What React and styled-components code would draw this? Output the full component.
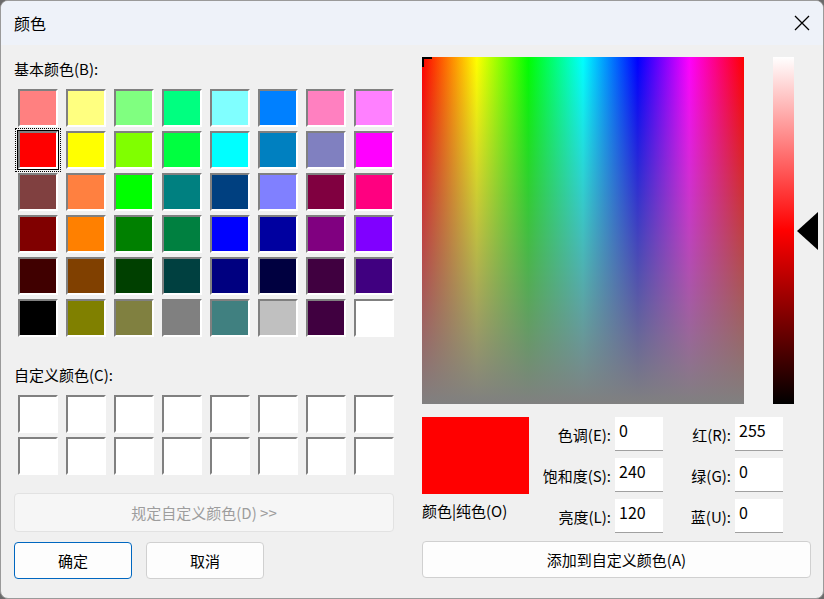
import React from "react";
import styled, { createGlobalStyle } from "styled-components";

const GlobalStyle = createGlobalStyle`
  html, body { margin: 0; padding: 0; background: #6b6b6b; }
  body { font-family: "Noto Sans CJK SC", "Noto Sans", sans-serif; font-size: 15px; color: #000; }
`;

const BASIC = [
  ["#FF8080", "#FFFF80", "#80FF80", "#00FF80", "#80FFFF", "#0080FF", "#FF80C0", "#FF80FF"],
  ["#FF0000", "#FFFF00", "#80FF00", "#00FF40", "#00FFFF", "#0080C0", "#8080C0", "#FF00FF"],
  ["#804040", "#FF8040", "#00FF00", "#008080", "#004080", "#8080FF", "#800040", "#FF0080"],
  ["#800000", "#FF8000", "#008000", "#008040", "#0000FF", "#0000A0", "#800080", "#8000FF"],
  ["#400000", "#804000", "#004000", "#004040", "#000080", "#000040", "#400040", "#400080"],
  ["#000000", "#808000", "#808040", "#808080", "#408080", "#C0C0C0", "#400040", "#FFFFFF"],
];

const Window = styled.div`
  width: 822px;
  height: 597px;
  border: 1px solid #9a9a9a;
  border-radius: 8px;
  background: #f0f0f0;
  overflow: hidden;
  display: flex;
  flex-direction: column;
`;

const TitleBar = styled.div`
  height: 44px;
  background: #eef2f9;
  display: flex;
  align-items: center;
  justify-content: space-between;
  padding: 0 12px 0 13px;
  font-size: 16px;
`;

const Body = styled.div`
  flex: 1;
  display: flex;
  padding: 12px 13px 0 13px;
`;

const Left = styled.div`
  width: 380px;
  display: flex;
  flex-direction: column;
`;

const Label = styled.div`
  height: 24px;
  line-height: 24px;
  font-size: 15px;
`;

const Grid = styled.div`
  display: grid;
  grid-template-columns: repeat(8, 40px);
  grid-auto-rows: 38px;
  column-gap: 8px;
  row-gap: 4px;
  padding-left: 4px;
  margin-top: 8px;
`;

const Swatch = styled.div`
  background: ${(p) => p.color};
  border-top: 2px solid #808080;
  border-left: 2px solid #808080;
  border-bottom: 2px solid #fff;
  border-right: 2px solid #fff;
  box-sizing: border-box;
  outline: ${(p) => (p.selected ? "1px dotted #000" : "none")};
  outline-offset: 2px;
  box-shadow: ${(p) => (p.selected ? "0 0 0 1px #000" : "none")};
`;

const WideButton = styled.div`
  height: 37px;
  border: 1px solid #e2e2e2;
  border-radius: 4px;
  background: #f6f6f6;
  color: #9d9d9d;
  display: flex;
  align-items: center;
  justify-content: center;
  margin-top: ${(p) => p.mt || 0}px;
`;

const Button = styled.div`
  width: ${(p) => p.w}px;
  height: 37px;
  box-sizing: border-box;
  border: 1px solid ${(p) => (p.primary ? "#0067c0" : "#d0d0d0")};
  border-radius: 4px;
  background: #fdfdfd;
  display: flex;
  align-items: center;
  justify-content: center;
`;

const ButtonRow = styled.div`
  display: flex;
  gap: 14px;
  margin-top: 10px;
`;

const Right = styled.div`
  margin-left: 28px;
  display: flex;
  flex-direction: column;
`;

const Top = styled.div`
  display: flex;
  height: 347px;
  align-items: flex-start;
`;

const Spectrum = styled.div`
  width: 322px;
  height: 347px;
  position: relative;
  background:
    linear-gradient(to bottom, rgba(128,128,128,0), #808080),
    linear-gradient(to right, #f00, #ff0 17%, #0f0 33%, #0ff 50%, #00f 67%, #f0f 83%, #f00);
`;

const Cross = styled.div`
  position: absolute;
  left: 0;
  top: 0;
  width: 8px;
  height: 8px;
  border-left: 2px solid #000;
  border-top: 2px solid #000;
`;

const LumBar = styled.div`
  margin-left: 29px;
  width: 21px;
  height: 347px;
  background: linear-gradient(to bottom, #fff, #f00 50%, #000);
`;

const Arrow = styled.div`
  margin-left: 3px;
  margin-top: 155px;
  width: 0;
  height: 0;
  border-top: 19px solid transparent;
  border-bottom: 19px solid transparent;
  border-right: 21px solid #000;
`;

const Bottom = styled.div`
  display: flex;
  margin-top: 13px;
`;

const PreviewCol = styled.div`
  width: 110px;
  display: flex;
  flex-direction: column;
`;

const Preview = styled.div`
  width: 107px;
  height: 77px;
  background: #f00;
`;

const PreviewLabel = styled.div`
  margin-top: 6px;
  font-size: 15px;
`;

const Fields = styled.div`
  display: grid;
  grid-template-columns: 90px 48px 72px 48px;
  grid-auto-rows: 34px;
  row-gap: 7px;
  margin-left: -7px;
`;

const FieldLabel = styled.div`
  display: flex;
  align-items: center;
  justify-content: flex-end;
  padding-right: 4px;
`;

const Input = styled.div`
  background: #fff;
  border-bottom: 1px solid #a0a0a0;
  padding: 2px 4px;
  font-size: 16px;
  line-height: 22px;
`;

const X = () => (
  <svg width="18" height="18" viewBox="0 0 18 18">
    <path d="M2 2 L16 16 M16 2 L2 16" stroke="#000" strokeWidth="1.3" />
  </svg>
);

export default function App() {
  return (
    <>
      <GlobalStyle />
      <Window>
        <TitleBar>
          <span>颜色</span>
          <X />
        </TitleBar>
        <Body>
          <Left>
            <Label>基本颜色(B):</Label>
            <Grid>
              {BASIC.flat().map((c, i) => (
                <Swatch key={i} color={c} selected={i === 8} />
              ))}
            </Grid>
            <Label style={{ marginTop: 26 }}>自定义颜色(C):</Label>
            <Grid>
              {Array.from({ length: 16 }).map((_, i) => (
                <Swatch key={i} color="#fff" />
              ))}
            </Grid>
            <WideButton mt={18}>规定自定义颜色(D) &gt;&gt;</WideButton>
            <ButtonRow>
              <Button w={118} primary>确定</Button>
              <Button w={118}>取消</Button>
            </ButtonRow>
          </Left>
          <Right>
            <Top>
              <Spectrum>
                <Cross />
              </Spectrum>
              <LumBar />
              <Arrow />
            </Top>
            <Bottom>
              <PreviewCol>
                <Preview />
                <PreviewLabel>颜色|纯色(O)</PreviewLabel>
              </PreviewCol>
              <Fields>
                <FieldLabel>色调(E):</FieldLabel>
                <Input>0</Input>
                <FieldLabel>红(R):</FieldLabel>
                <Input>255</Input>
                <FieldLabel>饱和度(S):</FieldLabel>
                <Input>240</Input>
                <FieldLabel>绿(G):</FieldLabel>
                <Input>0</Input>
                <FieldLabel>亮度(L):</FieldLabel>
                <Input>120</Input>
                <FieldLabel>蓝(U):</FieldLabel>
                <Input>0</Input>
              </Fields>
            </Bottom>
            <Button w={389} style={{ marginTop: 8 }}>添加到自定义颜色(A)</Button>
          </Right>
        </Body>
      </Window>
    </>
  );
}
